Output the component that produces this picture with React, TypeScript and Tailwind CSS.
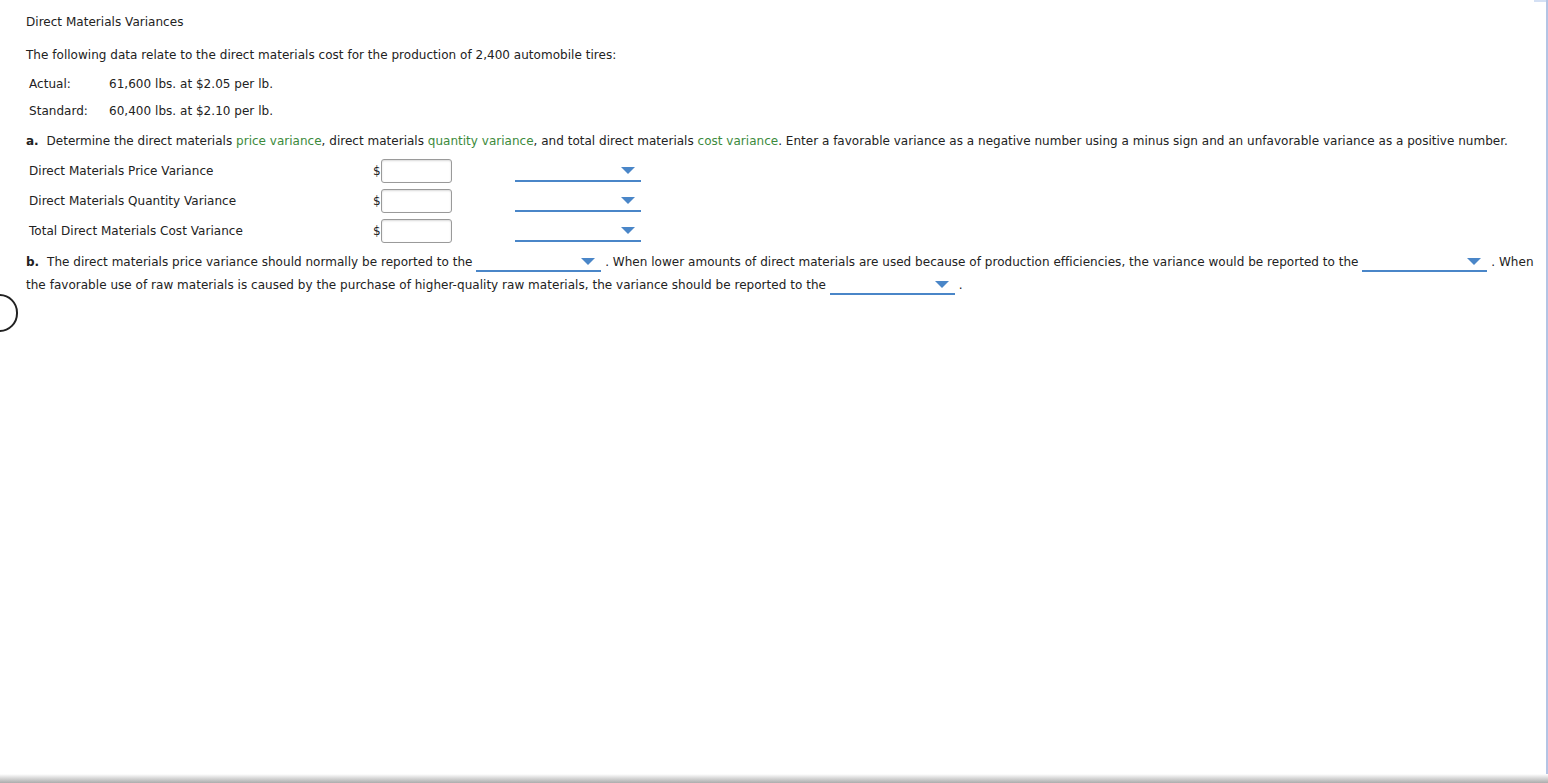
import React from "react";

const Tri = () => (
  <svg width="14" height="7" viewBox="0 0 14 7" className="block">
    <polygon points="0,0 14,0 7,7" fill="#4a86c8" />
  </svg>
);

const Drop = () => (
  <span className="inline-block overflow-hidden h-[14px] w-[125px] border-b-2 border-[#4a86c8] align-[-6px]">
    <span className="flex justify-end pr-[6px]">
      <Tri />
    </span>
  </span>
);

const Row = ({ label }: { label: string }) => (
  <div className="flex items-center h-[30px]">
    <div className="w-[347px] pl-[3px]">{label}</div>
    <span className="text-[12px] leading-none">$</span>
    <div className="w-[71px] h-[24px] border border-[#9a9a9a] rounded-[3px] shadow-[inset_0_1px_2px_rgba(0,0,0,0.15)] bg-white" />
    <div className="self-start ml-[63px] w-[126px] h-[22px] flex items-center justify-end border-b-2 border-[#4a86c8] pr-[6px] mt-[4px]">
      <Tri />
    </div>
  </div>
);

export default function App() {
  return (
    <div className="relative w-[1548px] h-[783px] bg-white overflow-hidden flex flex-col font-['DejaVu_Sans',sans-serif] text-[12px] leading-[16px] tracking-[0.03px] text-[#222]">
      <div className="flex-1 flex border-r-2 border-[#b4c4e4]">
        <div className="flex-1 pl-[26px]">
          <div className="mt-[14px]">Direct Materials Variances</div>
          <div className="mt-[17px]">
            The following data relate to the direct materials cost for the production of 2,400 automobile tires:
          </div>
          <div className="mt-[13px] flex pl-[3px]">
            <span className="w-[80px]">Actual:</span>
            <span>61,600 lbs. at $2.05 per lb.</span>
          </div>
          <div className="mt-[11px] flex pl-[3px]">
            <span className="w-[80px]">Standard:</span>
            <span>60,400 lbs. at $2.10 per lb.</span>
          </div>
          <div className="mt-[14px] tracking-[0.015px]">
            <b className="pr-[4px]">a.</b> Determine the direct materials{" "}
            <span className="text-[#3c8a3c]">price variance</span>, direct materials{" "}
            <span className="text-[#3c8a3c]">quantity variance</span>, and total direct materials{" "}
            <span className="text-[#3c8a3c]">cost variance</span>. Enter a favorable variance as a negative number using a minus sign and an unfavorable variance as a positive number.
          </div>
          <div className="mt-[7px]">
            <Row label="Direct Materials Price Variance" />
            <Row label="Direct Materials Quantity Variance" />
            <Row label="Total Direct Materials Cost Variance" />
          </div>
          <div className="mt-[5px] leading-[23px] pr-[10px]">
            <b className="pr-[4px]">b.</b> The direct materials price variance should normally be reported to the{" "}
            <Drop /> . When lower amounts of direct materials are used because of production efficiencies, the variance would be reported to the{" "}
            <Drop /> . When the favorable use of raw materials is caused by the purchase of higher-quality raw materials, the variance should be reported to the{" "}
            <Drop /> .
          </div>
        </div>
      </div>
      <div className="h-[9px] bg-gradient-to-b from-white to-[#acacac]" />
      <div className="absolute left-[-19px] top-[294px] w-[37px] h-[38px] rounded-full border-[2.5px] border-[#222]" />
      <div className="absolute right-[2px] top-0 w-[12px] h-[2px] bg-[#d4e0f4]" />
    </div>
  );
}
